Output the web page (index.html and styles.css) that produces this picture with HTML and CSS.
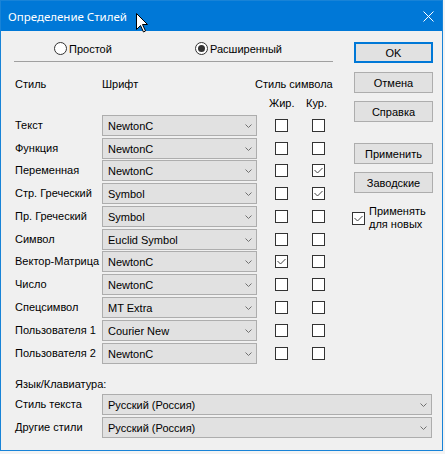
FILE: index.html
```html
<!DOCTYPE html>
<html lang="ru">
<head>
<meta charset="utf-8">
<title>Определение Стилей</title>
<link rel="stylesheet" href="styles.css">
</head>
<body>
<div class="window">
  <div class="titlebar">
    <span class="title">Определение Стилей</span>
    <svg class="close" width="11" height="11" viewBox="0 0 11 11"><path d="M0.5 0.5L10.5 10.5M10.5 0.5L0.5 10.5" stroke="#fff" stroke-width="1"/></svg>
  </div>
  <div class="content">
    <div class="top">
      <div class="left">
        <div class="radios">
          <div class="radio"><span class="circle"></span><span>Простой</span></div>
          <div class="radio"><span class="circle on"></span><span>Расширенный</span></div>
        </div>
        <div class="sep"></div>
        <div class="head1">
          <span>Стиль</span><span>Шрифт</span><span class="hsym">Стиль символа</span>
        </div>
        <div class="head2"><span>Жир.</span><span>Кур.</span></div>
        <div class="rows">
          <div class="row"><span class="lbl">Текст</span><div class="combo"><span>NewtonC</span><svg width="7" height="4" viewBox="0 0 7 4"><path d="M0.5 0.5L3.5 3.5L6.5 0.5" fill="none" stroke="#707070"/></svg></div><span class="cb c1"></span><span class="cb c2"></span></div>
          <div class="row s"><span class="lbl">Функция</span><div class="combo"><span>NewtonC</span><svg width="7" height="4" viewBox="0 0 7 4"><path d="M0.5 0.5L3.5 3.5L6.5 0.5" fill="none" stroke="#707070"/></svg></div><span class="cb c1"></span><span class="cb c2"></span></div>
          <div class="row"><span class="lbl">Переменная</span><div class="combo"><span>NewtonC</span><svg width="7" height="4" viewBox="0 0 7 4"><path d="M0.5 0.5L3.5 3.5L6.5 0.5" fill="none" stroke="#707070"/></svg></div><span class="cb c1"></span><span class="cb c2"><svg width="11" height="11" viewBox="0 0 11 11"><path d="M1.5 5L4.5 8L9.5 3" fill="none" stroke="#444"/></svg></span></div>
          <div class="row"><span class="lbl">Стр. Греческий</span><div class="combo"><span>Symbol</span><svg width="7" height="4" viewBox="0 0 7 4"><path d="M0.5 0.5L3.5 3.5L6.5 0.5" fill="none" stroke="#707070"/></svg></div><span class="cb c1"></span><span class="cb c2"><svg width="11" height="11" viewBox="0 0 11 11"><path d="M1.5 5L4.5 8L9.5 3" fill="none" stroke="#444"/></svg></span></div>
          <div class="row"><span class="lbl">Пр. Греческий</span><div class="combo"><span>Symbol</span><svg width="7" height="4" viewBox="0 0 7 4"><path d="M0.5 0.5L3.5 3.5L6.5 0.5" fill="none" stroke="#707070"/></svg></div><span class="cb c1"></span><span class="cb c2"></span></div>
          <div class="row s"><span class="lbl">Символ</span><div class="combo"><span>Euclid Symbol</span><svg width="7" height="4" viewBox="0 0 7 4"><path d="M0.5 0.5L3.5 3.5L6.5 0.5" fill="none" stroke="#707070"/></svg></div><span class="cb c1"></span><span class="cb c2"></span></div>
          <div class="row"><span class="lbl">Вектор-Матрица</span><div class="combo"><span>NewtonC</span><svg width="7" height="4" viewBox="0 0 7 4"><path d="M0.5 0.5L3.5 3.5L6.5 0.5" fill="none" stroke="#707070"/></svg></div><span class="cb c1"><svg width="11" height="11" viewBox="0 0 11 11"><path d="M1.5 5L4.5 8L9.5 3" fill="none" stroke="#444"/></svg></span><span class="cb c2"></span></div>
          <div class="row"><span class="lbl">Число</span><div class="combo"><span>NewtonC</span><svg width="7" height="4" viewBox="0 0 7 4"><path d="M0.5 0.5L3.5 3.5L6.5 0.5" fill="none" stroke="#707070"/></svg></div><span class="cb c1"></span><span class="cb c2"></span></div>
          <div class="row"><span class="lbl">Спецсимвол</span><div class="combo"><span>MT Extra</span><svg width="7" height="4" viewBox="0 0 7 4"><path d="M0.5 0.5L3.5 3.5L6.5 0.5" fill="none" stroke="#707070"/></svg></div><span class="cb c1"></span><span class="cb c2"></span></div>
          <div class="row"><span class="lbl">Пользователя 1</span><div class="combo"><span>Courier New</span><svg width="7" height="4" viewBox="0 0 7 4"><path d="M0.5 0.5L3.5 3.5L6.5 0.5" fill="none" stroke="#707070"/></svg></div><span class="cb c1"></span><span class="cb c2"></span></div>
          <div class="row"><span class="lbl">Пользователя 2</span><div class="combo"><span>NewtonC</span><svg width="7" height="4" viewBox="0 0 7 4"><path d="M0.5 0.5L3.5 3.5L6.5 0.5" fill="none" stroke="#707070"/></svg></div><span class="cb c1"></span><span class="cb c2"></span></div>
        </div>
      </div>
      <div class="right">
        <div class="btn default">OK</div>
        <div class="btn b-cancel">Отмена</div>
        <div class="btn b-help">Справка</div>
        <div class="btn b-apply">Применить</div>
        <div class="btn b-fact">Заводские</div>
        <div class="applynew">
          <span class="cb"><svg width="11" height="11" viewBox="0 0 11 11"><path d="M1.5 5L4.5 8L9.5 3" fill="none" stroke="#444"/></svg></span>
          <span class="applytext">Применять<br>для новых</span>
        </div>
      </div>
    </div>
    <div class="bottom">
      <div class="langtitle">Язык/Клавиатура:</div>
      <div class="brow"><span class="lbl">Стиль текста</span><div class="combo wide"><span>Русский (Россия)</span><svg width="7" height="4" viewBox="0 0 7 4"><path d="M0.5 0.5L3.5 3.5L6.5 0.5" fill="none" stroke="#707070"/></svg></div></div>
      <div class="brow"><span class="lbl">Другие стили</span><div class="combo wide"><span>Русский (Россия)</span><svg width="7" height="4" viewBox="0 0 7 4"><path d="M0.5 0.5L3.5 3.5L6.5 0.5" fill="none" stroke="#707070"/></svg></div></div>
    </div>
  </div>
  <svg class="cursor" width="13" height="20" viewBox="0 0 13 20"><path d="M0.5 0.5L0.5 16.5L4.5 12.5L7.5 19L9.5 18L6.5 11.5L11.5 11.5Z" fill="#fff" stroke="#000" stroke-width="1" stroke-linejoin="round"/></svg>
</div>
</body>
</html>
```

FILE: styles.css
```css
html, body {
  margin: 0;
  padding: 0;
}
body {
  background: #f3f3f3;
  font-family: "Liberation Sans", Arial, sans-serif;
  font-size: 11px;
  color: #000;
}
.window {
  position: relative;
  width: 443px;
  height: 451px;
  box-sizing: border-box;
  border: 1px solid #1883d7;
  background: #f0f0f0;
  display: flex;
  flex-direction: column;
}
.titlebar {
  height: 30px;
  flex: none;
  background: #0078d7;
  display: flex;
  align-items: center;
  padding: 0 8px 0 7px;
}
.title {
  flex: 1;
  color: #fff;
  font-family: "Noto Sans", "Open Sans", sans-serif;
  font-size: 11.5px;
}
.content {
  padding-left: 13px;
  display: flex;
  flex-direction: column;
}
.top {
  display: flex;
}
.left {
  width: 319px;
}
.radios {
  display: grid;
  grid-template-columns: 141px auto;
  padding: 11px 0 0 40px;
}
.radio {
  display: flex;
  align-items: center;
  height: 13px;
  gap: 2px;
}
.circle {
  width: 13px;
  height: 13px;
  box-sizing: border-box;
  border: 1px solid #333;
  border-radius: 50%;
  background: #fff;
  display: flex;
  align-items: center;
  justify-content: center;
}
.circle.on::after {
  content: "";
  width: 7px;
  height: 7px;
  border-radius: 50%;
  background: #333;
}
.sep {
  margin-top: 6px;
  height: 1px;
  background: #a0a0a0;
}
.head1 {
  margin-top: 16px;
  line-height: 13px;
  display: grid;
  grid-template-columns: 87px 155px auto;
  padding-left: 1px;
}
.hsym {
  margin-left: -2px;
  white-space: nowrap;
}
.head2 {
  margin-top: 6px;
  line-height: 13px;
  display: grid;
  grid-template-columns: 37px auto;
  padding-left: 255px;
}
.rows {
  margin-top: 5px;
}
.row {
  display: flex;
  align-items: flex-start;
  height: 23px;
  padding-left: 1px;
}
.row.s {
  height: 22px;
}
.lbl {
  width: 87px;
  flex: none;
  line-height: 21px;
  white-space: nowrap;
}
.combo {
  width: 155px;
  height: 21px;
  flex: none;
  box-sizing: border-box;
  border: 1px solid #adadad;
  background: #e1e1e1;
  display: flex;
  align-items: center;
  justify-content: space-between;
  padding: 0 4px 0 5px;
}
.combo.wide {
  width: 330px;
}
.cb {
  width: 13px;
  height: 13px;
  flex: none;
  box-sizing: border-box;
  border: 1px solid #333;
  background: #fff;
  display: block;
}
.cb svg {
  display: block;
}
.row .cb {
  margin-top: 4px;
}
.cb.c1 {
  margin-left: 18px;
}
.cb.c2 {
  margin-left: 24px;
}
.right {
  margin-left: 21px;
  width: 79px;
  padding-top: 11px;
  display: flex;
  flex-direction: column;
}
.btn {
  height: 21px;
  box-sizing: border-box;
  border: 1px solid #adadad;
  background: #e1e1e1;
  display: flex;
  align-items: center;
  justify-content: center;
}
.btn.default {
  border: 2px solid #0078d7;
}
.b-cancel { margin-top: 9px; }
.b-help { margin-top: 8px; }
.b-apply { margin-top: 21px; }
.b-fact { margin-top: 8px; }
.applynew {
  margin: 12px 0 0 -2px;
  display: flex;
  align-items: center;
  gap: 4px;
}
.applytext {
  line-height: 13px;
}
.bottom {
  padding-left: 1px;
}
.langtitle {
  margin-top: 12px;
  line-height: 13px;
}
.brow {
  display: flex;
  height: 23px;
}
.langtitle + .brow {
  margin-top: 3px;
}
.close {
  display: block;
}
.cursor {
  position: absolute;
  left: 135px;
  top: 12px;
}
```
